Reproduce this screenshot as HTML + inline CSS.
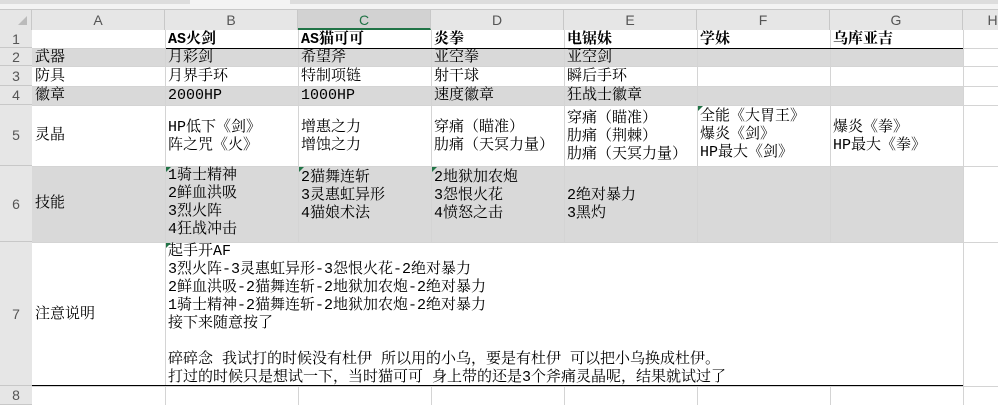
<!DOCTYPE html>
<html><head><meta charset="utf-8"><style>
body{margin:0;width:998px;height:405px;overflow:hidden;background:#fff;position:relative;font-family:"Liberation Mono","Noto Serif CJK SC",serif;font-size:15px;color:#000}
div{position:absolute;box-sizing:border-box}
.hl{left:0;height:1px;background:#d4d4d4}
.vl{top:10px;width:1px;background:#d4d4d4}
.ch{top:10px;height:20px;background:#e6e6e6;color:#555;font-family:"Liberation Sans",sans-serif;font-size:14px;text-align:center;line-height:20px;border-right:1px solid #c8c8c8}
.rh{left:0;width:32px;background:#e6e6e6;color:#555;font-family:"Liberation Sans",sans-serif;font-size:14px;text-align:center;border-bottom:1px solid #c8c8c8;display:flex;align-items:center;justify-content:center}
.t{white-space:pre;line-height:18px}
.b{font-weight:bold}
.g{background:#d9d9d9;left:32px;width:931px}
.tri{width:0;height:0;border-top:5px solid #217346;border-right:5px solid transparent}
</style></head><body>
<div style="left:0;top:0;width:998px;height:10px;background:#f3f3f3;border-bottom:1px solid #c8c8c8"></div>
<div style="left:0;top:0;width:190px;height:4px;background:#ddd"></div>
<div style="left:290px;top:0;width:708px;height:4px;background:#ddd"></div>
<div class="g" style="top:48px;height:18px"></div>
<div class="g" style="top:86px;height:19px"></div>
<div class="g" style="top:166px;height:76px"></div>
<div class="hl" style="top:48px;width:998px"></div>
<div class="hl" style="top:66px;width:998px"></div>
<div class="hl" style="top:86px;width:998px"></div>
<div class="hl" style="top:105px;width:998px"></div>
<div class="hl" style="top:166px;width:998px"></div>
<div class="hl" style="top:242px;width:998px"></div>
<div class="hl" style="top:386px;width:998px"></div>
<div class="vl" style="left:165px;height:395px"></div>
<div class="vl" style="left:298px;height:395px"></div>
<div class="vl" style="left:431px;height:395px"></div>
<div class="vl" style="left:564px;height:395px"></div>
<div class="vl" style="left:697px;height:395px"></div>
<div class="vl" style="left:830px;height:395px"></div>
<div class="vl" style="left:963px;height:395px"></div>
<div style="left:166px;top:243px;width:797px;height:143px;background:#fff"></div>
<div style="left:166px;top:48px;width:797px;height:1px;background:#000"></div>
<div style="left:0;top:385px;width:963px;height:1px;background:#000"></div>
<div class="ch" style="left:0;width:32px"><span style="position:absolute;left:18px;top:6px;border-bottom:9px solid #bbb;border-left:9px solid transparent"></span></div>
<div class="ch" style="left:32px;width:133px">A</div>
<div class="ch" style="left:165px;width:133px">B</div>
<div class="ch" style="left:298px;width:133px;background:#d2d2d2;border-bottom:2px solid #217346;color:#217346">C</div>
<div class="ch" style="left:431px;width:133px">D</div>
<div class="ch" style="left:564px;width:133px">E</div>
<div class="ch" style="left:697px;width:133px">F</div>
<div class="ch" style="left:830px;width:133px">G</div>
<div class="ch" style="left:963px;width:60px">H</div>
<div class="rh" style="top:30px;height:18px">1</div>
<div class="rh" style="top:48px;height:18px">2</div>
<div class="rh" style="top:66px;height:20px">3</div>
<div class="rh" style="top:86px;height:19px">4</div>
<div class="rh" style="top:105px;height:61px">5</div>
<div class="rh" style="top:166px;height:76px">6</div>
<div class="rh" style="top:242px;height:144px">7</div>
<div class="rh" style="top:386px;height:19px">8</div>
<div class="t b" style="left:168px;top:31px">AS火剑</div>
<div class="t b" style="left:301px;top:31px">AS猫可可</div>
<div class="t b" style="left:434px;top:31px">炎拳</div>
<div class="t b" style="left:567px;top:31px">电锯妹</div>
<div class="t b" style="left:700px;top:31px">学妹</div>
<div class="t b" style="left:833px;top:31px">乌库亚吉</div>
<div class="t" style="left:35px;top:49px">武器</div>
<div class="t" style="left:168px;top:49px">月彩剑</div>
<div class="t" style="left:301px;top:49px">希望斧</div>
<div class="t" style="left:434px;top:49px">亚空拳</div>
<div class="t" style="left:567px;top:49px">亚空剑</div>
<div class="t" style="left:35px;top:68px">防具</div>
<div class="t" style="left:168px;top:68px">月界手环</div>
<div class="t" style="left:301px;top:68px">特制项链</div>
<div class="t" style="left:434px;top:68px">射干球</div>
<div class="t" style="left:567px;top:68px">瞬后手环</div>
<div class="t" style="left:35px;top:87px">徽章</div>
<div class="t" style="left:168px;top:87px">2000HP</div>
<div class="t" style="left:301px;top:87px">1000HP</div>
<div class="t" style="left:434px;top:87px">速度徽章</div>
<div class="t" style="left:567px;top:87px">狂战士徽章</div>
<div class="t" style="left:35px;top:127px">灵晶</div>
<div class="t" style="left:168px;top:119px">HP低下《剑》
阵之咒《火》</div>
<div class="t" style="left:301px;top:119px">增惠之力
增蚀之力</div>
<div class="t" style="left:434px;top:119px">穿痛（瞄准）
肋痛（天冥力量）</div>
<div class="t" style="left:567px;top:110px">穿痛（瞄准）
肋痛（荆棘）
肋痛（天冥力量）</div>
<div class="tri" style="left:698px;top:106px"></div>
<div class="t" style="left:700px;top:108px">全能《大胃王》
爆炎《剑》
HP最大《剑》</div>
<div class="t" style="left:833px;top:119px">爆炎《拳》
HP最大《拳》</div>
<div class="t" style="left:35px;top:195px">技能</div>
<div class="tri" style="left:166px;top:167px"></div>
<div class="t" style="left:168px;top:167px">1骑士精神
2鲜血洪吸
3烈火阵
4狂战冲击</div>
<div class="tri" style="left:299px;top:167px"></div>
<div class="t" style="left:301px;top:169px">2猫舞连斩
3灵惠虹异形
4猫娘术法</div>
<div class="tri" style="left:432px;top:167px"></div>
<div class="t" style="left:434px;top:169px">2地狱加农炮
3怨恨火花
4愤怒之击</div>
<div class="t" style="left:567px;top:187px">2绝对暴力
3黑灼</div>
<div class="t" style="left:35px;top:306px">注意说明</div>
<div class="tri" style="left:166px;top:243px"></div>
<div class="t" style="left:168px;top:243px">起手开AF
3烈火阵-3灵惠虹异形-3怨恨火花-2绝对暴力
2鲜血洪吸-2猫舞连斩-2地狱加农炮-2绝对暴力
1骑士精神-2猫舞连斩-2地狱加农炮-2绝对暴力
接下来随意按了

碎碎念 我试打的时候没有杜伊 所以用的小乌，要是有杜伊 可以把小乌换成杜伊。
打过的时候只是想试一下，当时猫可可 身上带的还是3个斧痛灵晶呢，结果就试过了</div>
</body></html>
